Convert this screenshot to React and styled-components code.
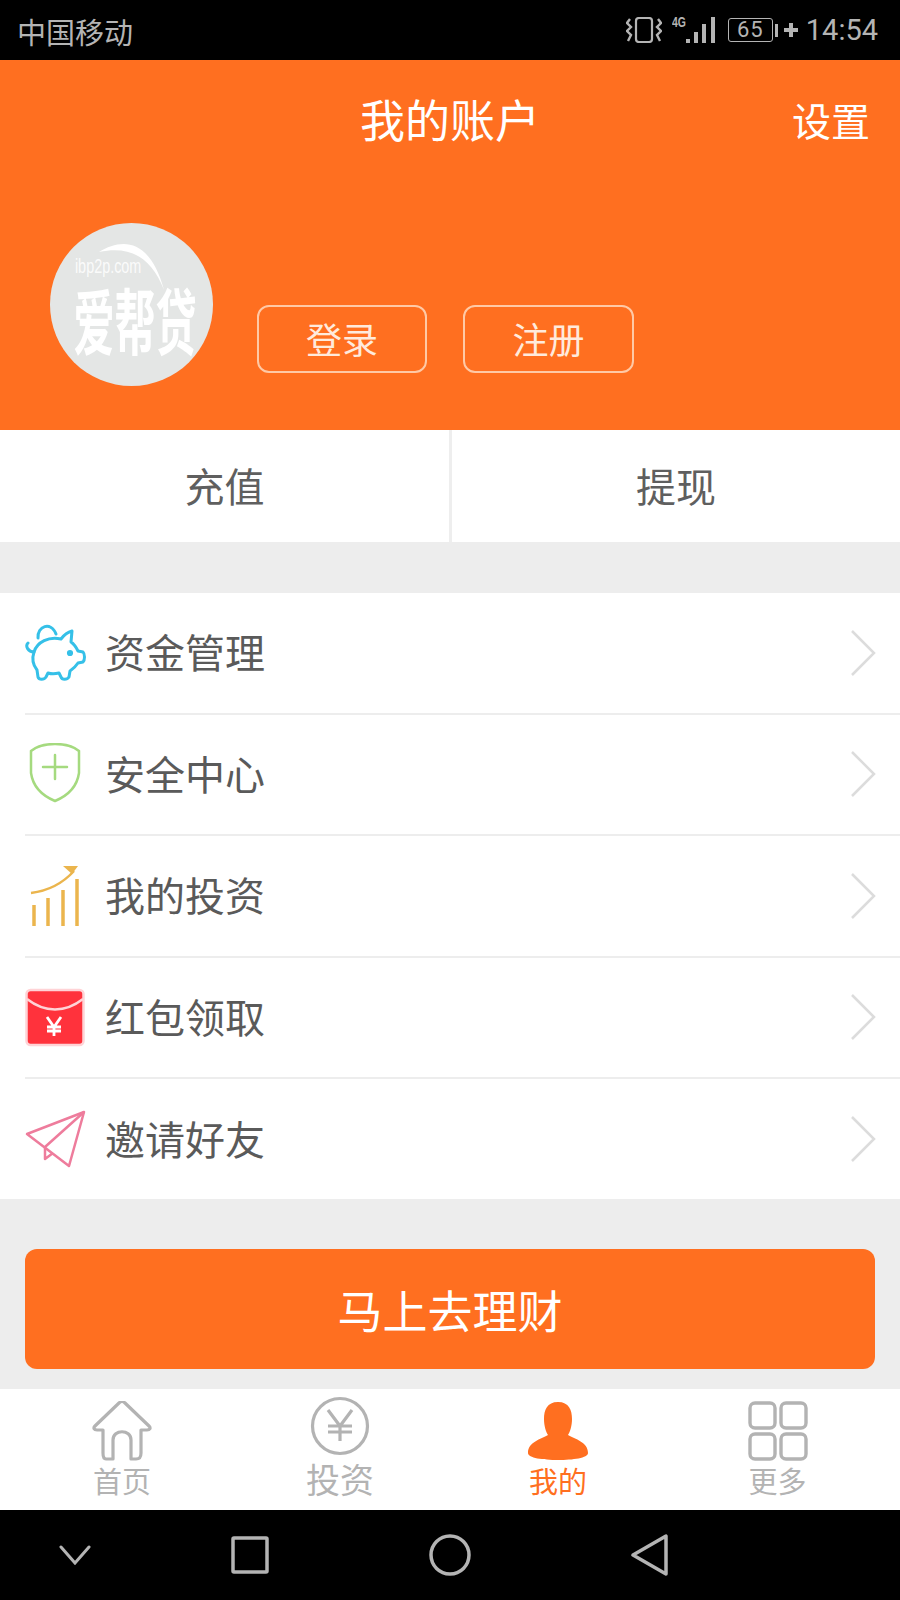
import React from 'react'
import styled, { createGlobalStyle } from 'styled-components'

const GlobalStyle = createGlobalStyle`
  html, body { margin: 0; padding: 0; background: #ededed; }
  * { box-sizing: border-box; }
  body { font-family: "Noto Sans CJK SC", "Noto Sans", sans-serif; }
`

const ORANGE = '#ff6f20'

const Page = styled.div`
  width: 900px;
  height: 1600px;
  display: flex;
  flex-direction: column;
  background: #ededed;
  overflow: hidden;
`

const StatusBar = styled.div`
  height: 60px;
  background: #000;
  color: #b4b4b4;
  display: flex;
  align-items: center;
  justify-content: space-between;
  padding: 0 22px 0 17px;
`
const Carrier = styled.span`
  font-size: 29px;
  line-height: 1;
  margin-top: 2px;
`
const StatusRight = styled.div`
  display: flex;
  align-items: center;
`
const VibrateIcon = styled.svg`
  width: 36px;
  height: 26px;
`
const SignalIcon = styled.svg`
  width: 44px;
  height: 30px;
  margin-left: 10px;
`
const BatteryBody = styled.div`
  width: 45px;
  height: 24px;
  margin-left: 12px;
  border: 1.5px solid #b4b4b4;
  border-radius: 3px;
  font: 22px/21px "Roboto", sans-serif;
  text-align: center;
  letter-spacing: 1px;
`
const BatteryCap = styled.div`
  width: 3px;
  height: 13px;
  margin: 0 6px 0 2px;
  background: #b4b4b4;
`
const Clock = styled.span`
  font: 29px/1 "Roboto", sans-serif;
  margin-left: 8px;
`

const Header = styled.div`
  height: 370px;
  background: ${ORANGE};
  color: #fff;
  display: flex;
  flex-direction: column;
`
const TitleRow = styled.div`
  height: 124px;
  padding: 0 30px 6px;
  display: grid;
  grid-template-columns: 1fr auto 1fr;
  align-items: center;
`
const Title = styled.div`
  grid-column: 2;
  font-size: 45px;
  line-height: 52px;
  white-space: nowrap;
`
const Settings = styled.div`
  justify-self: end;
  font-size: 39px;
`
const Profile = styled.div`
  margin: 39px 0 0 50px;
  display: flex;
  align-items: flex-start;
`
const Avatar = styled.div`
  width: 163px;
  height: 163px;
  border-radius: 50%;
  background: #e4e6e5;
  color: #fff;
  display: flex;
  flex-direction: column;
  align-items: center;
  overflow: hidden;
  position: relative;
`
const AvatarArc = styled.svg`
  position: absolute;
  left: 0;
  top: 0;
`
const AvatarDomain = styled.div`
  font: 20px/18px "Liberation Sans", sans-serif;
  color: rgba(255, 255, 255, 0.85);
  margin: 34px 47px 0 0;
  transform: scaleX(0.72);
`
const AvatarBrand = styled.div`
  font-size: 72px;
  line-height: 72px;
  font-weight: 700;
  white-space: nowrap;
  transform: scaleX(0.57);
  margin: 7px 0 0 6px;
`
const AuthButtons = styled.div`
  display: flex;
  gap: 36px;
  margin: 82px 0 0 44px;
`
const AuthButton = styled.div`
  width: ${p => p.$w}px;
  height: 68px;
  border: 2px solid #ffc9a6;
  border-radius: 12px;
  font-size: 36px;
  line-height: 62px;
  text-align: center;
  color: #ffeadc;
`

const Actions = styled.div`
  height: 112px;
  background: #fff;
  display: grid;
  grid-template-columns: 449px 451px;
`
const Action = styled.div`
  font-size: 40px;
  color: #5f5f5f;
  padding-bottom: 2px;
  display: flex;
  align-items: center;
  justify-content: center;
  & + & { border-left: 3px solid #eee; }
`

const Menu = styled.div`
  margin-top: 51px;
  background: #fff;
  padding-left: 25px;
`
const MenuRow = styled.div`
  height: ${p => (p.$last ? 120 : 121.5)}px;
  display: flex;
  align-items: center;
  padding-right: 24px;
  border-bottom: ${p => (p.$last ? 0 : '2px solid #ededed')};
`
const MenuIcon = styled.svg`
  width: 62px;
  height: 62px;
  flex: none;
`
const MenuLabel = styled.span`
  flex: 1;
  margin: 0 0 3px 18px;
  font-size: 40px;
  color: #5a5a5a;
`

const InvestButton = styled.div`
  margin: 50px 25px 0;
  height: 120px;
  border-radius: 12px;
  background: ${ORANGE};
  color: #fff;
  font-size: 45px;
  display: flex;
  align-items: center;
  justify-content: center;
`

const TabBar = styled.div`
  margin-top: 20px;
  height: 121px;
  background: #fff;
  display: grid;
  grid-template-columns: 218px 218px 218px 221px;
  padding-left: 13px;
`
const Tab = styled.div`
  display: flex;
  flex-direction: column;
  align-items: center;
  color: ${p => (p.$active ? ORANGE : '#b3b3b3')};
  padding-top: ${p => p.$top}px;
`
const TabIcon = styled.svg`
  width: 60px;
  height: 60px;
  flex: none;
`
const TabLabel = styled.span`
  font-size: ${p => p.$size}px;
  line-height: ${p => p.$size + 6}px;
  margin-top: ${p => (p.$size > 30 ? 3 : 2)}px;
`

const NavBar = styled.div`
  flex: 1;
  background: #000;
  display: grid;
  grid-template-columns: 150px 200px 200px 200px;
  align-items: center;
  justify-items: center;
`

const Chevron = () => (
  <svg width="26" height="50" viewBox="0 0 26 50" fill="none">
    <path d="M2 3 L24 25 L2 47" stroke="#dcdcdc" strokeWidth="2.5" />
  </svg>
)

const rows = [
  {
    label: '资金管理',
    icon: (
      <g fill="none" stroke="#35c0e8" strokeWidth="3" strokeLinejoin="round" strokeLinecap="round">
        <path d="M9 30 C3 30 0 24 3 21" />
        <path d="M13 16 C12 4 26 -1 31 12" />
        <path d="M9 30 C12 20 24 14 36 17 C39 13 43 10 47 9 L46 20 C49 22 51 25 53 29 L58 30 C60 32 60 38 58 40 L53 41 C51 44 48 47 45 49 L44 55 C42 58 37 58 36 55 L34 51 C30 52 26 52 23 51 L21 55 C19 58 14 58 13 55 L12 48 C8 43 7 36 9 30 Z" />
        <circle cx="45" cy="31" r="1.6" fill="#35c0e8" />
      </g>
    )
  },
  {
    label: '安全中心',
    icon: (
      <g fill="none" stroke="#a5da7f" strokeWidth="2.5" strokeLinecap="round">
        <path d="M6 8 C12 3 22 1 30 1 C38 1 48 3 54 8 V30 C52 44 42 53 30 58 C18 53 8 44 6 30 Z" />
        <path d="M30 12 V36 M18 24 H42" />
      </g>
    )
  },
  {
    label: '我的投资',
    icon: (
      <g fill="none" stroke="#ebb54d" strokeWidth="3.5">
        <path d="M9 40 V61 M23 33 V61 M38 25 V61 M52 14 V61" />
        <path d="M6 28 C22 26 38 18 49 6" strokeWidth="2.5" />
        <path d="M38 1 H53 L47 9 Z" fill="#ebb54d" stroke="none" />
      </g>
    )
  },
  {
    label: '红包领取',
    icon: (
      <g>
        <rect x="1.5" y="4" width="57" height="55" rx="4" fill="#ff323c" stroke="#ffd3d6" strokeWidth="2.5" />
        <path d="M2 13 C20 27 40 27 58 13" fill="none" stroke="#ffd3d6" strokeWidth="2.5" />
        <path d="M22 31 L29 41 L36 31 M29 41 V50 M22 41 H36 M22 45 H36" fill="none" stroke="#fff" strokeWidth="2.8" />
      </g>
    )
  },
  {
    label: '邀请好友',
    icon: (
      <g fill="none" stroke="#ee7c9c" strokeWidth="2.5" strokeLinejoin="round">
        <path d="M2 26 L59 4 L44 58 Z" />
        <path d="M59 4 L20 39 V51 L28 45" />
      </g>
    )
  }
]

const HomeIcon = () => (
  <TabIcon viewBox="0 0 60 60" fill="none" stroke="#b3b3b3" strokeWidth="3.2" strokeLinejoin="round">
    <path d="M14 58 C11 58 11 55 11 52 V29 H5 C2 29 1 27 3 25 L27 2 C29 0 31 0 33 2 L57 25 C59 27 58 29 55 29 H49 V52 C49 56 48 58 44 58 H39 V39 C39 28 21 28 21 39 V58 Z" />
  </TabIcon>
)

const YuanIcon = () => (
  <TabIcon viewBox="0 0 60 60" fill="none" stroke="#b3b3b3" strokeWidth="3.2">
    <circle cx="30" cy="30" r="27.5" />
    <path d="M18 14 L30 30 L42 14 M30 30 V45 M18 30 H42 M18 36 H42" />
  </TabIcon>
)

const PersonIcon = () => (
  <TabIcon viewBox="0 0 60 60" fill={ORANGE}>
    <path d="M30 1 C41 1 44 9 44 18 C44 25 42 31 40 34 C47 38 60 41 60 52 C60 57 45 59 30 59 C15 59 0 57 0 52 C0 41 13 38 20 34 C18 31 16 25 16 18 C16 9 19 1 30 1 Z" />
  </TabIcon>
)

const GridIcon = () => (
  <TabIcon viewBox="0 0 60 60" fill="none" stroke="#b3b3b3" strokeWidth="3.4">
    <rect x="2" y="2" width="25" height="25" rx="5" />
    <rect x="33" y="2" width="25" height="25" rx="5" />
    <rect x="2" y="33" width="25" height="25" rx="5" />
    <rect x="33" y="33" width="25" height="25" rx="5" />
  </TabIcon>
)

const tabs = [
  { label: '首页', size: 29, top: 12, Icon: HomeIcon },
  { label: '投资', size: 34, top: 7, Icon: YuanIcon },
  { label: '我的', size: 29, top: 12, Icon: PersonIcon, active: true },
  { label: '更多', size: 29, top: 12, Icon: GridIcon }
]

const App = () => {
  return (
    <Page>
      <GlobalStyle />
      <StatusBar>
        <Carrier>中国移动</Carrier>
        <StatusRight>
          <VibrateIcon viewBox="0 0 36 26" fill="none" stroke="#b4b4b4">
            <rect x="10" y="1" width="16" height="24" rx="3" strokeWidth="2.2" />
            <path d="M4 2 L1 6 L5 10 L1 14 L5 18 L2 24 M32 2 L35 6 L31 10 L35 14 L31 18 L34 24" strokeWidth="2.4" />
          </VibrateIcon>
          <SignalIcon viewBox="0 0 44 30">
            <text x="0" y="12" fontSize="14" fontWeight="700" fill="#b4b4b4" fontFamily="Liberation Sans" textLength="14" lengthAdjust="spacingAndGlyphs">4G</text>
            <g fill="#b4b4b4">
              <rect x="14" y="24" width="4" height="4" />
              <rect x="22" y="17" width="4" height="11" />
              <rect x="30" y="9" width="4" height="19" />
              <rect x="39" y="2" width="4" height="26" />
            </g>
          </SignalIcon>
          <BatteryBody>65</BatteryBody>
          <BatteryCap />
          <svg width="14" height="14" viewBox="0 0 14 14">
            <path d="M0 7 H14 M7 0 V14" stroke="#b4b4b4" strokeWidth="4" />
          </svg>
          <Clock>14:54</Clock>
        </StatusRight>
      </StatusBar>

      <Header>
        <TitleRow>
          <Title>我的账户</Title>
          <Settings>设置</Settings>
        </TitleRow>
        <Profile>
          <Avatar>
            <AvatarArc width="163" height="163" viewBox="0 0 163 163" fill="#fff">
              <path d="M49 29 C72 15 100 15 114 67 C102 36 82 22 49 29 Z" />
            </AvatarArc>
            <AvatarDomain>ibp2p.com</AvatarDomain>
            <AvatarBrand>爱帮贷</AvatarBrand>
          </Avatar>
          <AuthButtons>
            <AuthButton $w={170}>登录</AuthButton>
            <AuthButton $w={171}>注册</AuthButton>
          </AuthButtons>
        </Profile>
      </Header>

      <Actions>
        <Action>充值</Action>
        <Action>提现</Action>
      </Actions>

      <Menu>
        {rows.map((row, i) => (
          <MenuRow key={row.label} $last={i === rows.length - 1}>
            <MenuIcon viewBox="0 0 62 62">{row.icon}</MenuIcon>
            <MenuLabel>{row.label}</MenuLabel>
            <Chevron />
          </MenuRow>
        ))}
      </Menu>

      <InvestButton>马上去理财</InvestButton>

      <TabBar>
        {tabs.map(({ label, size, top, Icon, active }) => (
          <Tab key={label} $active={active} $top={top}>
            <Icon />
            <TabLabel $size={size}>{label}</TabLabel>
          </Tab>
        ))}
      </TabBar>

      <NavBar>
        <svg width="32" height="20" viewBox="0 0 32 20" fill="none" stroke="#b4b4b4" strokeWidth="3" strokeLinecap="round">
          <path d="M2 2 L16 18 L30 2" />
        </svg>
        <svg width="38" height="38" viewBox="0 0 38 38" fill="none" stroke="#b4b4b4" strokeWidth="3.5" strokeLinejoin="round">
          <rect x="2" y="2" width="34" height="34" rx="1" />
        </svg>
        <svg width="42" height="42" viewBox="0 0 42 42" fill="none" stroke="#b4b4b4" strokeWidth="3.5">
          <circle cx="21" cy="21" r="19" />
        </svg>
        <svg width="38" height="42" viewBox="0 0 38 42" fill="none" stroke="#b4b4b4" strokeWidth="3.5" strokeLinejoin="round">
          <path d="M35 2 V40 L2 21 Z" />
        </svg>
      </NavBar>
    </Page>
  )
}

export default App
